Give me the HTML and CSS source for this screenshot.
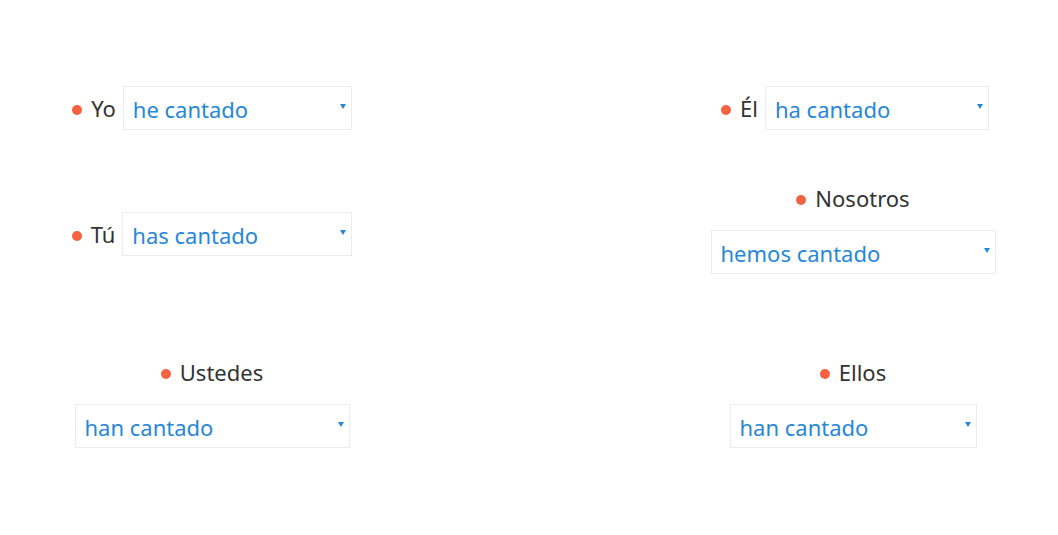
FILE: index.html
```html
<!DOCTYPE html>
<html lang="es">
<head>
<meta charset="utf-8">
<title>Pretérito perfecto</title>
<link rel="stylesheet" href="styles.css">
</head>
<body>
<main class="board">
  <div class="cell inline row1">
    <span class="label"><span class="dot"></span>Yo</span>
    <span class="pick w-yo"><select><option>he cantado</option><option>has cantado</option></select><svg class="caret" viewBox="0 0 6 5"><path d="M0 0H6L3 5Z"/></svg></span>
  </div>
  <div class="cell inline row1 shift-r">
    <span class="label"><span class="dot"></span>Él</span>
    <span class="pick w-el"><select><option>ha cantado</option></select><svg class="caret" viewBox="0 0 6 5"><path d="M0 0H6L3 5Z"/></svg></span>
  </div>
  <div class="cell inline row2 drop">
    <span class="label"><span class="dot"></span>Tú</span>
    <span class="pick w-tu"><select><option>has cantado</option></select><svg class="caret" viewBox="0 0 6 5"><path d="M0 0H6L3 5Z"/></svg></span>
  </div>
  <div class="cell stack row2">
    <span class="label"><span class="dot"></span>Nosotros</span>
    <span class="pick w-nos"><select><option>hemos cantado</option></select><svg class="caret" viewBox="0 0 6 5"><path d="M0 0H6L3 5Z"/></svg></span>
  </div>
  <div class="cell stack row3">
    <span class="label"><span class="dot"></span>Ustedes</span>
    <span class="pick w-ust"><select><option>han cantado</option></select><svg class="caret" viewBox="0 0 6 5"><path d="M0 0H6L3 5Z"/></svg></span>
  </div>
  <div class="cell stack row3">
    <span class="label"><span class="dot"></span>Ellos</span>
    <span class="pick w-ellos"><select><option>han cantado</option></select><svg class="caret" viewBox="0 0 6 5"><path d="M0 0H6L3 5Z"/></svg></span>
  </div>
</main>
</body>
</html>
```

FILE: styles.css
```css
html, body {
  margin: 0;
  background: #ffffff;
}

body {
  font-family: "Noto Sans", "Open Sans", sans-serif;
  font-size: 22px;
  color: #333333;
}

.board {
  display: grid;
  grid-template-columns: 408px 408px;
  grid-template-rows: 97px 174px 91px;
  column-gap: 233px;
  padding: 86px 0 0 8px;
}

.cell {
  display: flex;
  justify-content: center;
  align-items: center;
  align-self: start;
}

.inline .label {
  margin-right: 7px;
}

.shift-r {
  padding-left: 4px;
}

.drop {
  margin-top: 29px;
}

.stack {
  flex-direction: column;
  gap: 17px;
}

.label {
  display: flex;
  align-items: center;
  height: 30px;
  line-height: 30px;
  color: #333333;
  white-space: nowrap;
}

.dot {
  width: 10px;
  height: 10px;
  border-radius: 50%;
  background: #f4623f;
  margin-right: 9px;
  margin-top: 4px;
}

.pick {
  position: relative;
  display: block;
  height: 44px;
}

.pick select {
  appearance: none;
  -webkit-appearance: none;
  width: 100%;
  height: 44px;
  margin: 0;
  border: 1px solid #ececec;
  border-radius: 0;
  background: #ffffff;
  padding: 1px 0 0 9px;
  font-family: inherit;
  font-size: 22px;
  color: #2787d7;
  outline: none;
}

.caret {
  position: absolute;
  right: 6px;
  top: 18px;
  width: 6px;
  height: 5px;
  fill: #2787d7;
  pointer-events: none;
}

.w-yo { width: 229px; }
.w-el { width: 224px; }
.w-tu { width: 230px; }
.w-nos { width: 285px; }
.w-ust { width: 275px; }
.w-ellos { width: 247px; }
```
